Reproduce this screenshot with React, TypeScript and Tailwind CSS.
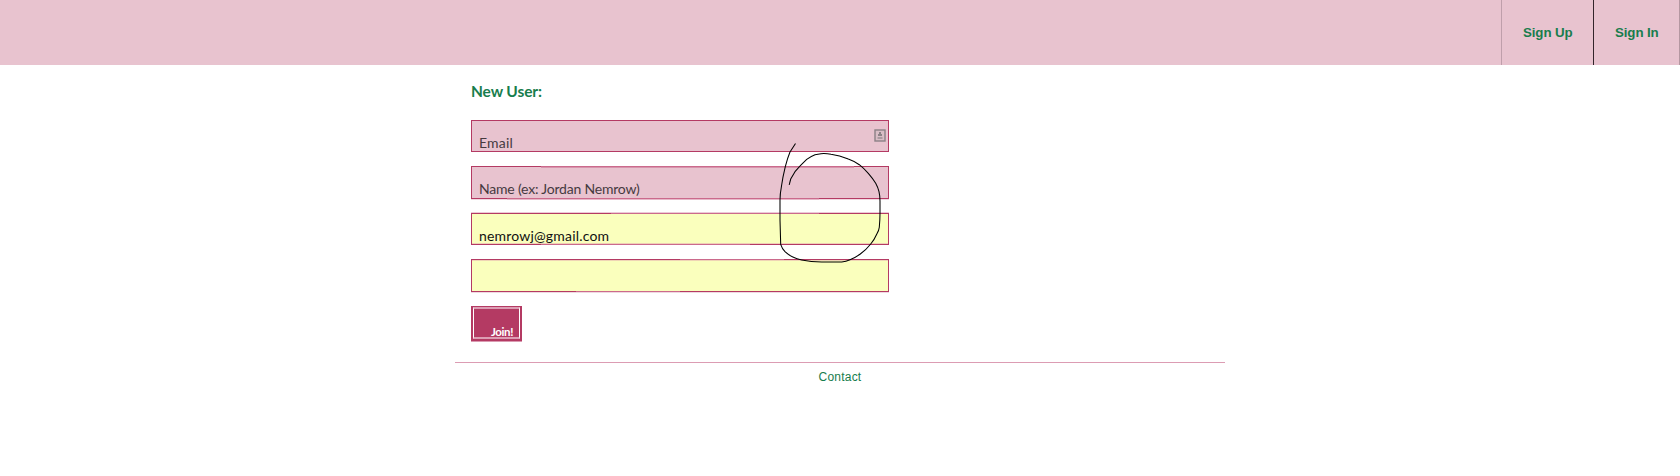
import React from "react";

const INK = "bg-[#b43a63]";
const MID = "bg-[#cb6a8c]";

type Seg = { w: string; c: string };

function Line({ segs }: { segs: Seg[] }) {
  return (
    <div className="flex h-px w-full">
      {segs.map((s, i) => (
        <div key={i} className={`${s.w} ${s.c}`} />
      ))}
    </div>
  );
}

type FieldProps = {
  top: Seg[][];
  bottom: Seg[][];
  body: string;
  input: string;
  placeholder?: string;
  value?: string;
  label: string;
  children?: React.ReactNode;
};

function Field({ top, bottom, body, input, placeholder, value, label, children }: FieldProps) {
  return (
    <div className="flex w-[418px] flex-col">
      {top.map((s, i) => (
        <Line key={i} segs={s} />
      ))}
      <div className={`flex border-x border-[#b43a63] ${body}`}>
        <input
          aria-label={label}
          className={`min-w-0 flex-1 bg-transparent pl-[7px] font-['Lato','Noto_Sans',sans-serif] leading-[18px] outline-none placeholder:text-[#463a3f] placeholder:opacity-100 ${input}`}
          placeholder={placeholder}
          defaultValue={value}
        />
        {children}
      </div>
      {bottom.map((s, i) => (
        <Line key={i} segs={s} />
      ))}
    </div>
  );
}

const full: Seg[] = [{ w: "w-full", c: INK }];

export default function App() {
  return (
    <div className="relative h-[476px] w-full overflow-hidden bg-white">
      <header className="flex h-[65px] justify-end bg-[#e8c3cf] font-['Liberation_Sans',Arial,sans-serif] text-[13.3px] font-bold leading-[65px] text-[#187d4d]">
        <a className="w-[92px] border-l border-[#bf9fab] pl-[21px] tracking-[-0.1px]">Sign Up</a>
        <a className="w-[87px] border-l border-r border-l-[#33252b] border-r-[#b497a1] pl-[21px] tracking-[-0.1px]">Sign In</a>
      </header>

      <main className="mx-auto w-[770px]">
        <form className="flex flex-col pl-4">
          <h1 className="mt-[16px] h-[39px] font-['Lato','Noto_Sans',sans-serif] text-[15.5px] font-bold leading-5 tracking-[-0.1px] text-[#187d4d]">
            New User:
          </h1>

          <Field
            label="Email"
            placeholder="Email"
            top={[full]}
            bottom={[full]}
            body="h-[30px] bg-[#e8c3cf]"
            input="pt-[14px] text-[14px] tracking-[0.2px]"
          >
            <svg className="mr-[2px] mt-[8px] h-[13px] w-[12px]" viewBox="0 0 12 13">
              <rect x="1" y="1" width="10" height="11" fill="#d9bdc6" stroke="#8c8186" strokeWidth="1.4" />
              <path d="M5 3h2v2h1v2H4V5h1z" fill="#8c8186" />
              <path d="M3.5 8h5v2h-5z" fill="#aa9aa0" />
            </svg>
          </Field>

          <div className="h-[14px]" />
          <Field
            label="Name"
            placeholder="Name (ex: Jordan Nemrow)"
            top={[
              [{ w: "w-[70px]", c: INK }, { w: "w-[313px]", c: MID }, { w: "w-[35px]", c: INK }],
              [{ w: "w-px", c: INK }, { w: "w-[69px]", c: "bg-[#e8c3cf]" }, { w: "w-[313px]", c: "bg-[#d794ac]" }, { w: "w-[34px]", c: "bg-[#e8c3cf]" }, { w: "w-px", c: INK }],
            ]}
            bottom={[
              [{ w: "w-[36px]", c: INK }, { w: "w-[312px]", c: MID }, { w: "w-[70px]", c: INK }],
              [{ w: "w-[36px]", c: "bg-[#f0d8e0]" }, { w: "w-[312px]", c: "bg-[#e6b9c9]" }, { w: "w-[70px]", c: "bg-[#f0d8e0]" }],
            ]}
            body="h-[30px] bg-[#e8c3cf]"
            input="pt-[12px] text-[14px] tracking-[-0.2px]"
          />

          <div className="h-[12px]" />
          <Field
            label="Email address"
            value="nemrowj@gmail.com"
            top={[
              [{ w: "w-full", c: "bg-[#eccbd7]" }],
              [{ w: "w-[140px]", c: INK }, { w: "w-[208px]", c: MID }, { w: "w-[70px]", c: INK }],
            ]}
            bottom={[
              [{ w: "w-px", c: INK }, { w: "w-[416px]", c: "bg-[#eed0b5]" }, { w: "w-px", c: INK }],
              [{ w: "w-[70px]", c: INK }, { w: "w-[209px]", c: MID }, { w: "w-[139px]", c: INK }],
            ]}
            body="h-[29px] bg-[#faffbd]"
            input="pt-[14px] text-[14px] tracking-[0.18px] text-[#111111]"
          />

          <div className="h-[14px]" />
          <Field
            label="Password"
            top={[
              [{ w: "w-[209px]", c: INK }, { w: "w-[104px]", c: MID }, { w: "w-[105px]", c: INK }],
              [{ w: "w-px", c: INK }, { w: "w-[416px]", c: "bg-[#efd5b5]" }, { w: "w-px", c: INK }],
            ]}
            bottom={[
              [{ w: "w-[105px]", c: INK }, { w: "w-[104px]", c: MID }, { w: "w-[209px]", c: INK }],
              [{ w: "w-full", c: "bg-[#f0d8e0]" }],
            ]}
            body="h-[30px] bg-[#faffbd]"
            input="text-[14px]"
          />

          <button
            type="button"
            className="mt-[13px] flex h-[36px] w-[51px] border-b border-[#da9ab1] bg-[#b43a63] px-[2px] pb-[2px] pt-px"
          >
            <span className="flex h-full w-full items-end justify-end border-x border-t-2 border-b-2 border-x-white border-y-[#dc9db3] pr-[6px] font-['Lato','Noto_Sans',sans-serif] text-[11.5px] font-bold leading-[10px] tracking-[-0.4px] text-white">
              Join!
            </span>
          </button>
        </form>

        <footer className="mt-[20px] border-t border-[#dc9cb3] pt-[6px] text-center font-['Liberation_Sans',Arial,sans-serif] text-[12px] leading-4 tracking-[0.2px] text-[#187d4d]">
          Contact
        </footer>
      </main>

      <svg className="pointer-events-none absolute left-0 top-0" width="1680" height="476" fill="none">
        <path
          d="M795.5 143.5L790 152Q787.5 158 785.3 166.7Q782.8 177 781.5 186Q780 194 780 200V220L780.7 244.3Q782 248.5 785 251.7Q788.5 255 792.3 256.7Q797 259 801.7 260Q811 262 821.7 262H841.7Q846 261.5 850 259.7Q855.5 257.5 860 254.3Q866 250 870.7 244Q874.5 239.5 876.7 234.3Q879 230.5 879.3 227.3Q880 220 880 213V201Q880 196 879 191.7Q878 187.5 875.7 183.3Q872.5 178 868.3 173.3Q864 168.5 859.3 164.7Q854 161 848.3 159Q839.5 155.5 831 154.3Q826 153.3 821 153.7L815 154.7Q810.5 156.5 806.7 159.3Q800.5 165 795 171.7L790.7 179L789.2 184.8"
          stroke="#000"
          strokeWidth="1.05"
          strokeLinejoin="round"
        />
      </svg>
    </div>
  );
}
